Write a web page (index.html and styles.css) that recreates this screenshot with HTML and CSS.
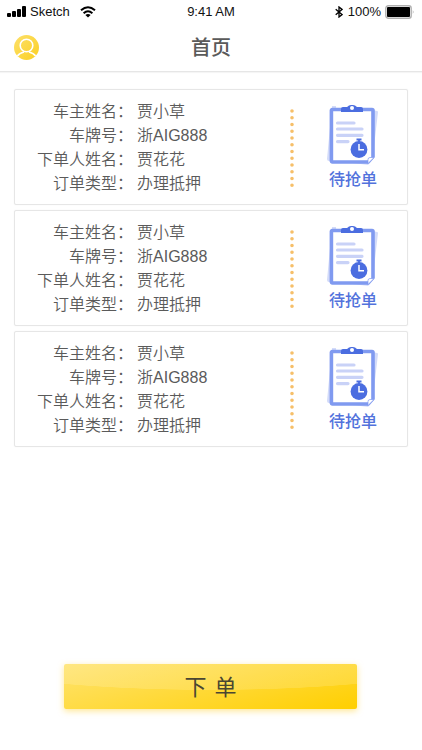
FILE: index.html
```html
<!DOCTYPE html>
<html lang="zh-CN">
<head>
    <meta charset="UTF-8">
    <meta name="viewport" content="width=device-width, initial-scale=1.0">
    <title>首页</title>
    <link rel="stylesheet" href="styles.css">
</head>
<body>
    <svg class="symbols" aria-hidden="true">
        <symbol id="clipboard" viewBox="0 0 52 62">
            <path d="M9 2 L5 2 L0 55 Q0 57 2 57 L10 58 Z" fill="#d3dbf9"/>
            <path d="M46 6 L50 7 Q51 7 51 8 L45 60 Q44 61.5 42 61 L25 59 Z" fill="#d3dbf9"/>
            <rect x="4.4" y="5.5" width="41.6" height="52.5" rx="1" fill="#fff" stroke="#809af0" stroke-width="3.6"/>
            <path d="M14 8 V5 Q14 3 16 3 H20 Q22 1 24 1 H26 Q28 1 30 3 H34 Q36 3 36 5 V8 Z" fill="#4b6de0"/>
            <circle cx="25" cy="4" r="2" fill="#fff"/>
            <path d="M10.5 19 H27 M10.5 25 H35 M10.5 31.3 H35 M10.5 37.6 H21" stroke="#c9d2f7" stroke-width="3.2" stroke-linecap="round"/>
            <path d="M29.5 35.5 H34.5 M32 35.5 V38" stroke="#4b6de0" stroke-width="1.8"/>
            <circle cx="32" cy="45.5" r="8.4" fill="#4b6de0"/>
            <path d="M32 40 V45.8 H37" fill="none" stroke="#fff" stroke-width="1.5"/>
            <path d="M41 61 L48 53 V61 Z" fill="#fff"/>
            <path d="M41 59.5 V55.5 Q41 53.5 43 53.5 H47 Z" fill="#fff" stroke="#809af0" stroke-width="0.7"/>
        </symbol>
        <symbol id="dots" viewBox="0 0 4 80">
            <path d="M2 3 V78" stroke="#f6bf69" stroke-width="3.6" stroke-linecap="round" stroke-dasharray="0 6.75"/>
        </symbol>
    </svg>

    <header class="header">
        <div class="status">
            <div class="status-left">
                <svg width="20" height="12" viewBox="0 0 20 12">
                    <rect x="0" y="7" width="4" height="4" rx="1"/>
                    <rect x="5" y="5" width="4" height="6" rx="1"/>
                    <rect x="10" y="3" width="4" height="8" rx="1"/>
                    <rect x="15" y="0" width="4" height="11" rx="1"/>
                </svg>
                <span class="carrier">Sketch</span>
                <svg width="16" height="12" viewBox="0 0 16 12" fill="none" stroke="#000" stroke-width="2">
                    <path d="M1 4.3 Q8 -1.9 15 4.3"/>
                    <path d="M3.6 7.2 Q8 3.4 12.4 7.2"/>
                    <path d="M5.4 8.9 Q8 6.9 10.6 8.9 L8 11.6 Z" fill="#000" stroke="none"/>
                </svg>
            </div>
            <span>9:41 AM</span>
            <div class="status-right">
                <svg width="8" height="12" viewBox="0 0 8 12" fill="none" stroke="#000" stroke-width="1.3">
                    <path d="M0.7 3.2 L7 8.6 L4 11 V1 L7 3.4 L0.7 8.8"/>
                </svg>
                <span class="percent">100%</span>
                <svg width="30" height="14" viewBox="0 0 30 14">
                    <rect x="0.8" y="0.8" width="25.4" height="12.4" rx="2.5" fill="#fff" stroke="#b0b0b0" stroke-width="1.4"/>
                    <rect x="2" y="2" width="23" height="10" rx="1"/>
                    <path d="M27.8 5 Q29.4 7 27.8 9 Z" fill="#a5a5a5"/>
                </svg>
            </div>
        </div>
        <div class="nav">
            <button class="avatar" type="button" aria-label="我的">
                <svg width="26" height="26" viewBox="0 0 26 26">
                    <defs>
                        <linearGradient id="gold" x1="0" y1="0" x2="1" y2="1">
                            <stop offset="0" stop-color="#fde06a"/>
                            <stop offset="1" stop-color="#fbd022"/>
                        </linearGradient>
                        <clipPath id="disc"><circle cx="12.5" cy="12.5" r="12.5"/></clipPath>
                    </defs>
                    <circle cx="12.5" cy="12.5" r="12.5" fill="url(#gold)"/>
                    <g fill="none" stroke="#fff" stroke-width="1.6" clip-path="url(#disc)">
                        <circle cx="12.5" cy="10.5" r="6.3"/>
                        <path d="M3 21.5 Q5.5 18 10 17 M15 17 Q19.5 18 22 21.5"/>
                    </g>
                </svg>
            </button>
            <h1>首页</h1>
        </div>
    </header>

    <main class="orders">
        <article class="card">
            <dl class="info">
                <dt>车主姓名：</dt><dd>贾小草</dd>
                <dt>车牌号：</dt><dd>浙AIG888</dd>
                <dt>下单人姓名：</dt><dd>贾花花</dd>
                <dt>订单类型：</dt><dd>办理抵押</dd>
            </dl>
            <svg class="divider"><use href="#dots"/></svg>
            <div class="state">
                <svg class="clip"><use href="#clipboard"/></svg>
                <span>待抢单</span>
            </div>
        </article>
        <article class="card">
            <dl class="info">
                <dt>车主姓名：</dt><dd>贾小草</dd>
                <dt>车牌号：</dt><dd>浙AIG888</dd>
                <dt>下单人姓名：</dt><dd>贾花花</dd>
                <dt>订单类型：</dt><dd>办理抵押</dd>
            </dl>
            <svg class="divider"><use href="#dots"/></svg>
            <div class="state">
                <svg class="clip"><use href="#clipboard"/></svg>
                <span>待抢单</span>
            </div>
        </article>
        <article class="card">
            <dl class="info">
                <dt>车主姓名：</dt><dd>贾小草</dd>
                <dt>车牌号：</dt><dd>浙AIG888</dd>
                <dt>下单人姓名：</dt><dd>贾花花</dd>
                <dt>订单类型：</dt><dd>办理抵押</dd>
            </dl>
            <svg class="divider"><use href="#dots"/></svg>
            <div class="state">
                <svg class="clip"><use href="#clipboard"/></svg>
                <span>待抢单</span>
            </div>
        </article>
    </main>

    <footer class="footer">
        <button class="submit" type="button"><span>下</span><span>单</span></button>
    </footer>
</body>
</html>
```
FILE: styles.css
```css
* {
    box-sizing: border-box;
}
body {
    display: flex;
    flex-direction: column;
    min-height: 100vh;
    margin: 0;
    background: #fff;
    color: #5a5a5a;
    font-family: "Liberation Sans", "Noto Sans CJK SC", sans-serif;
    font-size: 16px;
    font-weight: 350;
    line-height: 24px;
}
svg {
    display: block;
}
.symbols {
    position: absolute;
    width: 0;
    height: 0;
}
button {
    border: 0;
    padding: 0;
    font-family: inherit;
    cursor: pointer;
}

/* header */
.header {
    border-bottom: 1px solid #e6e6e6;
    box-shadow: 0 1px 1px #f5f5f5;
}
.status {
    display: grid;
    grid-template-columns: 1fr auto 1fr;
    align-items: center;
    height: 24px;
    padding: 0 7px;
    color: #111;
    font-size: 13px;
}
.status-left, .status-right {
    display: flex;
    align-items: center;
}
.status-right {
    justify-content: flex-end;
}
.carrier {
    margin: 0 10px 0 3px;
}
.percent {
    margin: 0 4px 0 5px;
}
.nav {
    display: grid;
    grid-template-columns: 26px 1fr 26px;
    align-items: center;
    height: 47px;
    padding: 0 14px;
}
.nav h1 {
    margin: 0;
    font-size: 20px;
    font-weight: 500;
    text-align: center;
}
.avatar {
    background: none;
}

/* order list */
.orders {
    display: flex;
    flex: 1;
    flex-direction: column;
    gap: 5px;
    padding: 17px 14px;
}
.card {
    display: flex;
    align-items: center;
    padding: 10px 28px 8px 22px;
    border: 1px solid #e6e6e6;
    border-radius: 2px;
    box-shadow: 0 0 1px #e6e6e6;
}
.info {
    display: grid;
    grid-template-columns: auto 1fr;
    flex: 1;
    column-gap: 4px;
    margin: 0;
}
.info dt {
    text-align: right;
}
.info dd {
    margin: 0;
}
.divider {
    width: 4px;
    height: 80px;
    margin-right: 33px;
}
.state {
    display: flex;
    flex-direction: column;
    align-items: center;
    gap: 2px;
    color: #5272dc;
    font-weight: 500;
}
.clip {
    width: 52px;
    height: 62px;
}

/* bottom button */
.footer {
    padding: 0 65px 41px 64px;
}
.submit {
    display: flex;
    align-items: center;
    justify-content: center;
    gap: 8px;
    width: 100%;
    height: 45px;
    padding-bottom: 4px;
    border-radius: 2px;
    background:
        radial-gradient(ellipse 100% 100% at 50% -42%, rgba(255, 255, 255, 0.14) 99%, transparent 100%),
        linear-gradient(165deg, #ffe36e, #ffcf00);
    box-shadow: 0 2px 6px rgba(255, 208, 40, 0.5);
    color: #4a4632;
    font-size: 22px;
}
```
